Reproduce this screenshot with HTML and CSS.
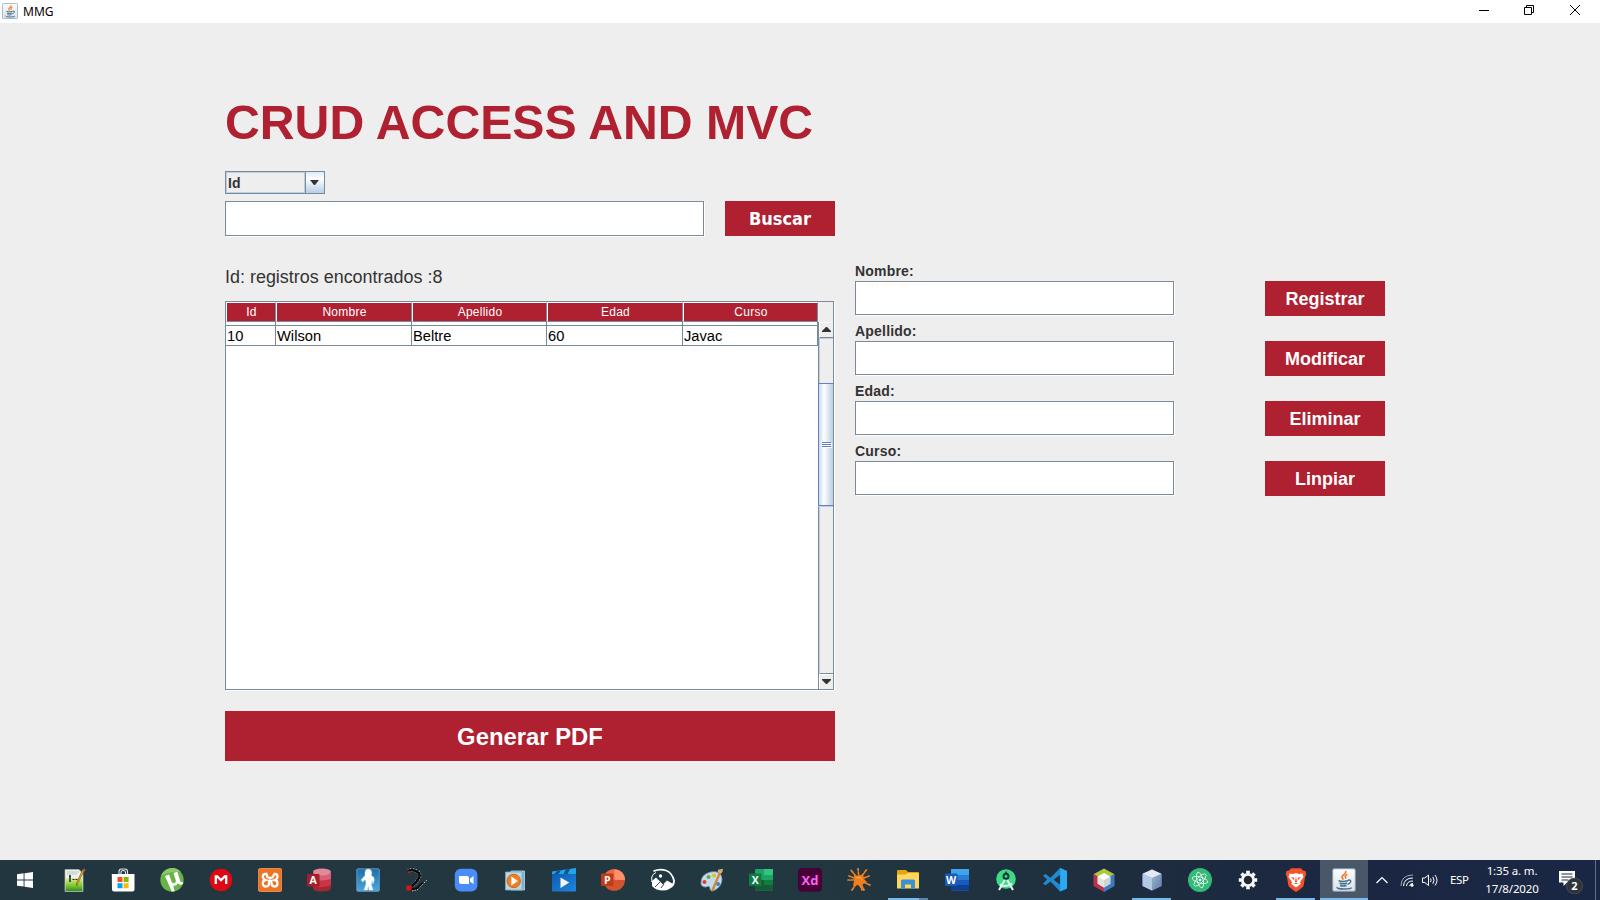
FILE: index.html
```html
<!DOCTYPE html>
<html lang="es">
<head>
<meta charset="utf-8">
<title>MMG</title>
<link rel="stylesheet" href="styles.css">
</head>
<body>
<div class="screen">
  <header class="titlebar">
    <svg class="app-icon" width="16" height="16" viewBox="0 0 24 24"><use href="#java"/></svg>
    <span class="app-name">MMG</span>
    <div class="win-controls">
      <svg width="12" height="12" viewBox="0 0 12 12"><path d="M1 6.500h10" stroke="#000" fill="none"/></svg>
      <svg width="12" height="12" viewBox="0 0 12 12"><path d="M1.500 3.500h7v7h-7zM3.500 3.500v-2h7v7h-2" stroke="#000" fill="none"/></svg>
      <svg width="12" height="12" viewBox="0 0 12 12"><path d="M1 1l10 10M11 1L1 11" stroke="#000" fill="none"/></svg>
    </div>
  </header>

  <main class="content">
    <section class="left">
      <h1 class="title">CRUD ACCESS AND MVC</h1>
      <div class="combo">
        <span class="combo-value">Id</span>
        <span class="combo-arrow"><svg width="9" height="5" viewBox="0 0 9 5"><path d="M0 0h9L5 5H4z" fill="#333"/></svg></span>
      </div>
      <div class="search">
        <div class="field search-field"></div>
        <button class="btn btn-search">Buscar</button>
      </div>
      <p class="count">Id: registros encontrados :8</p>
      <div class="pane">
        <div class="table">
          <div class="row head"><span>Id</span><span>Nombre</span><span>Apellido</span><span>Edad</span><span>Curso</span></div>
          <div class="row partial"><span></span><span></span><span></span><span></span><span></span></div>
          <div class="row"><span>10</span><span>Wilson</span><span>Beltre</span><span>60</span><span>Javac</span></div>
        </div>
        <div class="side">
          <div class="corner"></div>
          <div class="scroll">
            <div class="sbtn up"><svg width="9" height="5" viewBox="0 0 9 5"><path d="M4 0h1l4 4v1H0V4z" fill="#333"/></svg></div>
            <div class="track"><div class="thumb"><i></i><i></i><i></i></div></div>
            <div class="sbtn down"><svg width="9" height="5" viewBox="0 0 9 5"><path d="M0 0h9v1L5 5H4L0 1z" fill="#333"/></svg></div>
          </div>
        </div>
      </div>
      <button class="btn btn-pdf">Generar PDF</button>
    </section>

    <section class="form">
      <div class="group"><label>Nombre:</label><div class="field"></div></div>
      <div class="group"><label>Apellido:</label><div class="field"></div></div>
      <div class="group"><label>Edad:</label><div class="field"></div></div>
      <div class="group"><label>Curso:</label><div class="field"></div></div>
    </section>

    <section class="actions">
      <button class="btn">Registrar</button>
      <button class="btn">Modificar</button>
      <button class="btn">Eliminar</button>
      <button class="btn">Linpiar</button>
    </section>
  </main>

  <footer class="taskbar">
    <div class="apps">
      <!-- Start -->
      <div class="app"><svg viewBox="0 0 24 24"><path d="M4 6.200l6.600-.9v6.200H4zM11.500 5.200L20 4v7.500h-8.500zM4 12.400h6.600v6.200L4 17.700zM11.500 12.400H20V20l-8.500-1.200z" fill="#fff"/></svg></div>
      <!-- Notepad++ -->
      <div class="app"><svg viewBox="0 0 24 24"><path d="M3 1.500h14l4 4V23.500H3z" fill="#eef2ea" stroke="#aab5a8" stroke-width=".7"/><path d="M3.500 10h17v13h-17z" fill="url(#gGreen)"/><path d="M5 4h12M5 6h10" stroke="#b9c4c9"/><path d="M8 8v6M7 8h2" stroke="#223" stroke-width="1.500"/><path d="M10.500 11.500h2M13.500 11.500h2" stroke="#223" stroke-width="1.200"/><path d="M22 3l-6 12-1.500 3 .3-3.600L20.500 2z" fill="#e8a92c" stroke="#8a5a14" stroke-width=".7"/><path d="M20.500 2l1.500-1.500 1.500 1L22.300 3.500z" fill="#c4574a"/></svg></div>
      <!-- Store -->
      <div class="app"><svg viewBox="0 0 24 24"><path d="M8 7V3.500Q8 1 10.500 1H14q2.500 0 2.500 2.500V7M10 7V4.500Q10 2.500 12.200 2.500T14.500 4.500V7" fill="none" stroke="#dfe8ea" stroke-width="1.100"/><path d="M.8 6h22.700v15.500q0 2-2 2H3q-2 0-2-2z" fill="#fff"/><path d="M6.500 9h5v5h-5z" fill="#f25022"/><path d="M12.600 9h5v5h-5z" fill="#7fba00"/><path d="M6.500 15.200h5v5h-5z" fill="#00a4ef"/><path d="M12.600 15.200h5v5h-5z" fill="#ffb900"/></svg></div>
      <!-- uTorrent -->
      <div class="app"><svg viewBox="0 0 24 24"><circle cx="12" cy="12" r="11.700" fill="#69b345"/><path d="M1 8A11.700 11.700 0 0 1 21 4Q10 3 1 8z" fill="#8bc86a"/><path d="M5 8l4-1.500 2.500 7q1 2.500 3 1.500t1-3.500L13.500 5l3.800-1.300 3 9.300q.7 2 2.700 1l.2 1.500q-3.200 2.500-5.500-.2-1 3-4.500 2.500l1.500 5.500-3 .3z" fill="#fff"/></svg></div>
      <!-- MEGA -->
      <div class="app"><svg viewBox="0 0 24 24"><circle cx="12" cy="12" r="11.300" fill="#e00812"/><path d="M6.800 16V8.500h1.500L12 12.200l3.700-3.700h1.500V16" fill="none" stroke="#fff" stroke-width="2.300"/></svg></div>
      <!-- XAMPP -->
      <div class="app"><svg viewBox="0 0 24 24"><rect x=".3" y=".5" width="23.500" height="23" rx="2" fill="#ee7322" stroke="#f6a25a" stroke-width=".8"/><path d="M9.500 6H7.500Q4.800 6 4.800 8.500T7.500 12Q4.800 12.500 4.800 15.500T8 18.500t3-3.500V14q0-1.500 1.200-1.500T13.500 14v1q0 3.500 3 3.500t3-3-2.700-3.500q2.700-1 2.700-3.500T17 6H15.500M9 6.500v1.300q0 2 3.200 2t3.300-2V6.500" fill="none" stroke="#fff" stroke-width="2.300"/></svg></div>
      <!-- Access -->
      <div class="app"><svg viewBox="0 0 24 24"><path d="M6 4v16q0 3.500 9 3.500t9-3.500V4z" fill="#a4262f"/><path d="M6 11q9 4 18-1v7q-9 4-18 1z" fill="#c93448"/><path d="M6 5q4 4 18 0v6q-9 3-18 1z" fill="#d95f76"/><ellipse cx="15" cy="4" rx="9" ry="3.400" fill="#e4889b"/><rect x="0" y="6" width="12.500" height="12.500" rx="1" fill="#a51d28"/><text x="6.200" y="16" class="logo" font-size="10.500">A</text></svg></div>
      <!-- Helper -->
      <div class="app"><svg viewBox="0 0 24 24"><rect x=".8" y=".8" width="22.500" height="22.500" rx="1" fill="url(#gBlue)" stroke="#6ba7cc" stroke-width=".8"/><path d="M9 5q0-4 3.300-4t3.500 4l-.5 2.500q3 1 3 4.500l-1.300 4-1-4-.5 5 1.500 5h-4l-.7-4-.8 4H8l2-6-.5-4.500-3 2.500-1.500-2 4-4.500z" fill="#fff" stroke="#d8e3ea" stroke-width=".4"/></svg></div>
      <!-- Dragon -->
      <div class="app"><svg viewBox="0 0 24 24"><path d="M3 3l4-1.500 5 1.500q4 3 2 7t-7 8" fill="none" stroke="#aab0b2" stroke-width="3.600" stroke-dasharray="1.200 1.400"/><path d="M2.500 3l4.500-1 5 1.500q4 2.500 2 6.500t-7 8M5 21q7 1 9-2t4-4" fill="none" stroke="#080808" stroke-width="2.300"/><path d="M2 3l3 3 1-3" fill="#a51818"/><path d="M1.500 17.500h5v5h-5z" fill="#e01212"/><path d="M7 23l6-1.500 4-4.500 5-5" fill="none" stroke="#c9ced0" stroke-width="1" stroke-dasharray="1.500 1"/></svg></div>
      <!-- Zoom -->
      <div class="app"><svg viewBox="0 0 24 24"><rect x=".8" y=".8" width="22.600" height="22.600" rx="6" fill="#4a8cf8"/><path d="M5 8h8q2 0 2 2v6H7q-2 0-2-2zM16 10.800L19.500 8v8L16 13.400z" fill="#fff"/></svg></div>
      <!-- Media player -->
      <div class="app"><svg viewBox="0 0 24 24"><path d="M8 3h13.500v19H8z" fill="#7eb2cc" stroke="#b9d9e6" stroke-width=".8"/><path d="M2.500 4H19v18H2.500z" fill="#b7d8e8" stroke="#7facbf" stroke-width=".8"/><circle cx="10.700" cy="13" r="6.700" fill="#f0801f" stroke="#d76410"/><path d="M8.300 8.500L15 13l-6.700 4.500z" fill="#fff"/></svg></div>
      <!-- Movies -->
      <div class="app"><svg viewBox="0 0 24 24"><rect x="0" y="6" width="24" height="17.500" rx="1" fill="url(#gMovie)"/><path d="M0 3.500L24 0v6H0z" fill="#22a5e8"/><path d="M5 3l4-.7L6.500 6H2.500zM14 1.500l4-.6L15.500 6h-4z" fill="#0b4f96"/><path d="M8.500 9.500l8.700 5-8.700 5.500z" fill="#f2f4f7"/></svg></div>
      <!-- PowerPoint -->
      <div class="app"><svg viewBox="0 0 24 24"><circle cx="13.200" cy="12" r="10.800" fill="#d35230"/><path d="M13.200 1.200A10.800 10.800 0 0 1 24 12H13.200z" fill="#ff8f6b"/><path d="M13.200 1.200V12H2.400A10.800 10.800 0 0 1 13.200 1.200z" fill="#ed6c47"/><rect x="0" y="5.500" width="12.500" height="12.500" rx="1" fill="#c13b1b"/><text x="6.200" y="15.700" class="logo" font-size="10.500">P</text></svg></div>
      <!-- Gallery -->
      <div class="app"><svg viewBox="0 0 24 24"><path d="M2.500 3.200Q9 .5 15 2.500t8 10q.2 4-3 6.500" fill="none" stroke="#fff" stroke-width="1.800"/><circle cx="9.500" cy="8" r="1.700" fill="#fff"/><path d="M1 13l4-3.500 4 4 3 3 4-4 7 4q-4 6-11 6T1 18z" fill="#fff"/><path d="M4 19l5-5M10 20l3-4" stroke="#22363f" stroke-width=".9"/><path d="M.8 14V9Q2 5.500 5 4.500" fill="none" stroke="#fff"/></svg></div>
      <!-- Paint -->
      <div class="app"><svg viewBox="0 0 24 24"><path d="M1 15Q1 6 11 4t11 7q0 7-7 11-5 2-5-1.500T6 19Q1 19 1 15z" fill="#c3dcea" stroke="#809fb2" stroke-width=".8"/><circle cx="4.500" cy="14" r="2" fill="#e33b38"/><circle cx="8.500" cy="9" r="2" fill="#64ac3c"/><circle cx="14" cy="7.500" r="2" fill="#f2b824"/><circle cx="18" cy="16" r="2" fill="#3b82cf"/><path d="M19 4l2 1-7.500 18-2 .5v-2z" fill="#ce873c"/><path d="M18 4q-1-2 1-2.500L23 .7l-.5 3Q21 7 18 4z" fill="#d6ac72"/></svg></div>
      <!-- Excel -->
      <div class="app"><svg viewBox="0 0 24 24"><rect x="6" y="1" width="18" height="21.500" rx="1" fill="#21a366"/><path d="M15 1h9v6h-9z" fill="#33c481"/><path d="M6 12h9v10.500H6z" fill="#185c37"/><path d="M15 12h9v5h-9z" fill="#107c41"/><path d="M15 17h9v5.500h-9z" fill="#185c37"/><rect x="0" y="5.500" width="12.500" height="12.500" rx="1" fill="#107c41"/><text x="6.200" y="15.700" class="logo" font-size="10.500">X</text></svg></div>
      <!-- XD -->
      <div class="app"><svg viewBox="0 0 24 24"><rect x="0" y="0" width="24" height="23.700" rx="4" fill="#470137"/><text x="12" y="16.500" class="logo xd" font-size="13">Xd</text></svg></div>
      <!-- Splash -->
      <div class="app"><svg viewBox="0 0 24 24"><path d="M12 12L3 1M12 12L11 0M12 12l8-11M12 12l10-4M12 12l11 5M12 12l5 10M12 12L5 22M12 12H1M12 12l3 10M12 12L2 8" stroke="#ee8122" stroke-width="1.700" stroke-linecap="round" stroke-dasharray="8 1.500 3"/><path d="M7 7l4 1 5-2 1 5 3 3-4 2-2 4-3-3-5 1 1-5z" fill="#ef7e1d"/><path d="M9 10l4-1 2 3" fill="none" stroke="#ffb15c"/></svg></div>
      <!-- Explorer -->
      <div class="app split"><svg viewBox="0 0 24 24"><path d="M1 3q0-1 1-1h8l2 2h10q1 0 1 1v15H1z" fill="#e6a50c"/><path d="M1 6.500h8.500L12 5h11v15.500H1z" fill="#ffd75e"/><path d="M5 21v-8q0-1.500 1.500-1.500h11q1.500 0 1.500 1.500v8h-4v-4.500H9V21z" fill="#3c91d5"/></svg></div>
      <!-- Word -->
      <div class="app"><svg viewBox="0 0 24 24"><rect x="6" y="1" width="18" height="21.500" rx="1" fill="#2b7cd3"/><path d="M6 1h18v6H6z" fill="#41a5ee"/><path d="M6 12h18v5H6z" fill="#185abd"/><path d="M6 17h18v5.500H6z" fill="#103f91"/><rect x="0" y="5.500" width="12.500" height="12.500" rx="1" fill="#185abd"/><text x="6.200" y="15.700" class="logo" font-size="10.500">W</text></svg></div>
      <!-- Android Studio -->
      <div class="app"><svg viewBox="0 0 24 24"><circle cx="12" cy="11" r="9.800" fill="#3ddc84"/><path d="M12 3.500v2" stroke="#17343c" stroke-width="1.500"/><circle cx="12" cy="8.300" r="2.500" fill="none" stroke="#17343c" stroke-width="2"/><path d="M10.800 12L5 22M13.200 12L19 22M6 16.500q6 3.500 12-1" stroke="#e9f7f3" stroke-width="2" fill="none"/></svg></div>
      <!-- VS Code -->
      <div class="app"><svg viewBox="0 0 24 24"><path d="M17 0L7.500 9.700 2.500 6 0 7.500l4 4L0 15.700l2.500 1.600 5-3.800L17 23.500l7-3V3zM17.200 6.800v10L10.700 11.700z" fill="#1f8ad2" fill-rule="evenodd"/><path d="M17.200 0L24 3v17.500l-6.800 3z" fill="#2aa8f2"/></svg></div>
      <!-- NetBeans -->
      <div class="app"><svg viewBox="0 0 24 24"><path d="M12 .5l10.500 5.800L12 12 1.500 6.300z" fill="#adc83b"/><path d="M1.500 6.300L12 12v12L1.500 18z" fill="#b8344a"/><path d="M22.500 6.300L12 12v12l10.500-6z" fill="#3b7cc0"/><path d="M12 5l6.300 3.600v7.200L12 19.400l-6.300-3.600V8.600z" fill="#fff"/><path d="M5.700 8.600L12 12v7.400l-6.300-3.600z" fill="#e6e3df"/><path d="M12 12l6.300-3.400v7.200L12 19.400z" fill="#cfd3d4"/></svg></div>
      <!-- NetBeans cube -->
      <div class="app run"><svg viewBox="0 0 24 24"><path d="M12 1l10 4.500v12.800L12 23 2 18.300V5.500z" fill="#8faed0" stroke="#1b255b"/><path d="M12 1.500l9.300 4.200L12 10 2.700 5.700z" fill="#e4eaf0"/><path d="M2.700 6L12 10v12.500l-9.300-4.400z" fill="#b4c9e3"/><path d="M12 10l9.300-4v12.100L12 22.500z" fill="url(#gCube)"/></svg></div>
      <!-- Atom -->
      <div class="app"><svg viewBox="0 0 24 24"><circle cx="12" cy="12" r="12" fill="#35b978"/><g fill="none" stroke="#e3f5ea" stroke-width=".9"><ellipse cx="12" cy="12" rx="8" ry="3" transform="rotate(15 12 12)"/><ellipse cx="12" cy="12" rx="8" ry="3" transform="rotate(75 12 12)"/><ellipse cx="12" cy="12" rx="8" ry="3" transform="rotate(135 12 12)"/></g><circle cx="12" cy="12" r="1.300" fill="#fff"/></svg></div>
      <!-- Settings -->
      <div class="app"><svg viewBox="0 0 24 24"><circle cx="12" cy="12" r="5.700" fill="none" stroke="#fff" stroke-width="2.800"/><path d="M18.800 12h2.400M16.800 16.800l1.700 1.700M12 18.800v2.400M7.200 16.800l-1.700 1.700M5.200 12H2.800M7.200 7.200L5.500 5.500M12 5.200V2.800M16.800 7.200l1.700-1.700" stroke="#fff" stroke-width="3.600"/></svg></div>
      <!-- Brave -->
      <div class="app run"><svg viewBox="0 0 24 24"><path d="M7 .3h10l2 2.200 2.500.5L22.300 6 21 9.500 19.500 18Q18 20 12 24 6 20 4.500 18L3 9.500 1.700 6 2.500 3 5 2.500z" fill="#f4512c"/><path d="M5.500 5.500L9 6l3-1 3 1 3.500-.5L19.500 9l-3.500 5 .7 2L12 19.500 7.300 16l.7-2-3.500-5z" fill="#fff"/><path d="M7 9l3.500.8L10 12zM17 9l-3.500.8.5 2.200zM12 8.500l-1 5 1 1.500 1-1.500zM9.500 16l2.500-1.200 2.500 1.200" fill="#f4512c"/></svg></div>
      <!-- Java -->
      <div class="app active"><svg viewBox="0 0 24 24"><use href="#java"/></svg></div>
    </div>
    <div class="tray">
      <svg class="chevron" width="14" height="14" viewBox="0 0 14 14"><path d="M1.500 10L7 4.500 12.500 10" fill="none" stroke="#fff" stroke-width="1.200"/></svg>
      <svg class="wifi" width="14" height="14" viewBox="0 0 14 14"><g fill="none" stroke="#fff"><path d="M1 13Q1 2 13 2" stroke="#9ba5b3"/><path d="M3.500 13Q4 5 13 5"/><path d="M6.500 13Q7 8 13 8"/><path d="M9.500 13q.5-2.500 3.500-2.500"/></g><circle cx="12" cy="12.300" r="1.500" fill="#fff"/></svg>
      <svg class="speaker" width="18" height="14" viewBox="0 0 18 14"><g fill="none" stroke="#fff"><path d="M1.500 5v4.500h2.300l3.700 3V2L3.800 5z"/><path d="M9.500 5.500q1.300 1.700 0 3.500M11.800 3.800q2.500 3.400 0 7M14 2q4 5.300 0 10.500"/></g></svg>
      <span class="lang">ESP</span>
      <div class="clock"><span>1:35 a. m.</span><span>17/8/2020</span></div>
      <svg class="notif" width="26" height="26" viewBox="0 0 26 26"><path d="M1 3h16v11.500H9L5.500 18v-3.500H1z" fill="#fff"/><path d="M3.500 6h11M3.500 9h11M3.500 12h7" stroke="#1b2942"/><circle cx="16.500" cy="18" r="8" fill="#303438" stroke="#5b6068" stroke-width=".6"/><text x="16.500" y="22" class="logo" font-size="11">2</text></svg>
      <span class="peek"></span>
    </div>
  </footer>
</div>

<svg class="defs" width="0" height="0">
  <defs>
    <linearGradient id="gGreen" x2="0" y2="1"><stop offset="0" stop-color="#dceea0"/><stop offset=".6" stop-color="#7dc52a"/><stop offset="1" stop-color="#2f8f2a"/></linearGradient>
    <linearGradient id="gBlue" x2="0" y2="1"><stop offset="0" stop-color="#1d6faa"/><stop offset="1" stop-color="#49a7dc"/></linearGradient>
    <linearGradient id="gMovie" x2="1" y2="1"><stop offset="0" stop-color="#0d5cb0"/><stop offset="1" stop-color="#1f86dc"/></linearGradient>
    <linearGradient id="gCube" x2="1" y2="1"><stop offset="0" stop-color="#9bb6d2"/><stop offset="1" stop-color="#5f7da3"/></linearGradient>
    <linearGradient id="gJava" x2="0" y2="1"><stop offset="0" stop-color="#fdfdfd"/><stop offset="1" stop-color="#dbe2e8"/></linearGradient>
    <g id="java">
      <rect x=".7" y=".7" width="22.600" height="22.600" rx="1.500" fill="url(#gJava)" stroke="#7f9db3"/>
      <path d="M13.500 3q1 2-2 4t0 4.500M15.500 6.500q-3.500 1-1.500 4" fill="none" stroke="#ea8133" stroke-width="1.700"/>
      <path d="M6.500 12.700q4 1.500 9.500 0M7.500 15.200q4 1 7.500 0M8 17.500q3 1 6.500 0M16 12.200q3.500-.5 2.500 1.800T15.500 16M5 19q-.5 2 7 2t7.500-1.500" fill="none" stroke="#45718f" stroke-width="1.500"/>
    </g>
  </defs>
</svg>
</body>
</html>
```
FILE: styles.css
```css
* { box-sizing: border-box; }
body { margin: 0; font-family: "Liberation Sans", Arial, sans-serif; color: #333; }
.screen { width: 1600px; height: 900px; display: flex; flex-direction: column; background: #eee; overflow: hidden; }
.defs { position: absolute; }

/* Title bar */
.titlebar { height: 23px; flex: none; background: #fff; display: flex; align-items: center; padding-left: 2px; }
.app-icon { margin-top: -1px; }
.app-name { margin-left: 5px; font: 12px "Noto Sans", "Open Sans", sans-serif; color: #000; }
.win-controls { margin-left: auto; display: flex; padding: 0 19px 3px 0; }
.win-controls svg { display: block; margin-left: 34px; }
.win-controls svg:nth-child(2) { margin-left: 33px; }

/* Main area */
.content { flex: 1; display: flex; align-items: flex-start; padding-left: 225px; }
.left { width: 610px; padding-top: 72px; }
.title { margin: 0; height: 76px; line-height: 55px; font-size: 48.200px; color: #af2031; white-space: nowrap; }
.btn { display: block; width: 120px; height: 35px; padding: 2px 0 0; border: 0; background: #af2031; color: #fff; font: bold 18px "Liberation Sans", Arial, sans-serif; }
.combo { width: 100px; height: 23px; display: flex; border: 1px solid #7a8a99; font-size: 14px; font-weight: bold; }
.combo-value { flex: 1; padding-left: 1px; border: 1px solid #b8cfe5; line-height: 20px; }
.combo-arrow { width: 19px; display: flex; align-items: center; justify-content: center; border-left: 1px solid #7a8a99; background: linear-gradient(#dde8f3, #fff 30%, #b8cfe5); }
.combo-arrow svg { margin-left: -1px; }
.field { height: 34px; width: 319px; background: #fff; border: 1px solid #7a8a99; box-shadow: 1px 1px 0 #fff; }
.search { display: flex; justify-content: space-between; margin-top: 7px; }
.search-field { width: 479px; height: 35px; }
.btn-search { width: 110px; padding-top: 0; font: bold 18px "DejaVu Sans Condensed", "DejaVu Sans", sans-serif; font-stretch: condensed; }
.count { margin: 31px 0 0; height: 34px; line-height: 21px; font-size: 17.950px; }

/* Table */
.pane { width: 609px; height: 389px; display: flex; background: #fff; border: 1px solid #7a8a99; box-shadow: 1px 1px 0 #fff; }
.table { width: 592px; }
.row { display: grid; grid-template: 100% / 50px 136px 135px 136px 135px; height: 20px; }
.row span { border: 0 solid #7a8a99; border-width: 0 1px 1px 0; padding-left: 1px; font-size: 14.700px; line-height: 20px; color: #000; }
.row.partial { height: 4px; }
.head span { padding: 0 0 0 1px; border-top: 1px solid #fff; border-left: 1px solid #fff; background: #af2031; color: #fff; font-size: 12px; line-height: 19px; letter-spacing: .25px; text-align: center; }
.side { flex: 1; display: flex; flex-direction: column; }
.corner { height: 20px; background: #eee; }
.scroll { flex: 1; display: flex; flex-direction: column; border-left: 1px solid #7a8a99; background: #eee; }
.sbtn { height: 16px; display: flex; align-items: center; justify-content: center; border: 1px solid #fff; border-width: 1px 0 0 1px; }
.sbtn svg { margin-left: -1px; }
.up { border-bottom: 1px solid #7a8a99; }
.up svg { margin-top: -2px; }
.track { flex: 1; padding-top: 44px; border-left: 1px solid #b8cfe5; border-top: 1px solid #b8cfe5; }
.thumb { height: 123px; margin-left: -2px; border: 1px solid #6382bf; border-right: 0; box-shadow: 0 1px 0 #b8cfe5; background: linear-gradient(90deg, #c8daeb, #fff 35%, #b8cfe5); display: flex; flex-direction: column; align-items: center; justify-content: center; gap: 1px; }
.thumb i { width: 9px; height: 1px; background: #6382bf; box-shadow: 1px 1px 0 #fff; }
.down { height: 16px; border-top: 1px solid #7a8a99; box-shadow: inset 0 1px 0 #fff; }
.btn-pdf { width: 610px; height: 50px; margin-top: 21px; font-size: 23.850px; }

/* Form */
.form { width: 320px; margin-left: 20px; padding-top: 238px; }
.group { height: 60px; }
.group label { display: block; height: 20px; line-height: 20px; font-size: 14px; font-weight: bold; letter-spacing: .2px; }
.actions { margin-left: 90px; padding-top: 258px; display: grid; gap: 25px; }

/* Taskbar */
.taskbar { height: 40px; flex: none; display: flex; background: linear-gradient(90deg, #22363f, #223840 50%, #1d2c3e 72%, #1b2742 85%, #1a2744); }
.apps { width: 1368px; display: grid; grid-template-columns: repeat(22, 49.080px) repeat(6, 1fr); }
.app { display: flex; align-items: center; justify-content: center; border-bottom: 2px solid transparent; padding-top: 2px; background-clip: padding-box; }
.app > svg { width: 24px; height: 24px; display: block; flex: none; }
.run { background: linear-gradient(#76b9ed, #76b9ed) center bottom / 39px 2px no-repeat border-box; }
.split { background: linear-gradient(90deg, #76b9ed 31px, #5c86ab 31px) center bottom / 40px 2px no-repeat border-box; }
.active { background: #4a5769; border-bottom-color: #76b9ed; }
.logo { font-family: "Open Sans", "Noto Sans", sans-serif; font-weight: bold; fill: #fff; text-anchor: middle; }
.xd { fill: #ff61f6; }
.tray { flex: 1; display: flex; align-items: center; color: #fff; font: 12px "Noto Sans", "Open Sans", sans-serif; padding-left: 7px; }
.wifi { margin-left: 11px; }
.speaker { margin-left: 7px; }
.lang { margin-left: 11px; margin-top: -1px; width: 22px; font-size: 11.500px; letter-spacing: -.4px; }
.clock { width: 60px; margin-left: 10px; display: flex; flex-direction: column; text-align: center; line-height: 18px; font-size: 11.500px; letter-spacing: -.15px; white-space: nowrap; }
.notif { margin-left: 16px; margin-top: 2px; }
.peek { width: 1px; height: 40px; margin-left: auto; margin-right: 4px; background: #68727f; }
```
